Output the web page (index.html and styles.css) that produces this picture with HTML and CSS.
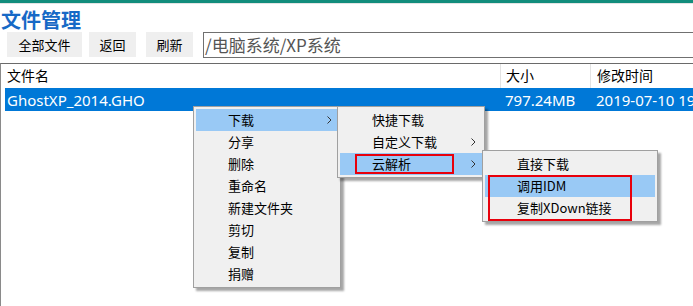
FILE: index.html
```html
<!DOCTYPE html>
<html lang="zh-CN">
<head>
<meta charset="utf-8">
<title>文件管理</title>
<link rel="stylesheet" href="styles.css">
</head>
<body>
<div class="app">
  <h1 class="title">文件管理</h1>
  <div class="toolbar">
    <button class="btn btn-wide">全部文件</button>
    <button class="btn">返回</button>
    <button class="btn btn-gap">刷新</button>
    <div class="path">/电脑系统/XP系统</div>
  </div>
  <div class="table">
    <div class="row head">
      <div class="c-name">文件名</div>
      <div class="c-size">大小</div>
      <div class="c-time">修改时间</div>
    </div>
    <div class="row sel">
      <div class="c-name">GhostXP_2014.GHO</div>
      <div class="c-size">797.24MB</div>
      <div class="c-time">2019-07-10 19:32</div>
    </div>
  </div>

  <div class="menu menu1">
    <div class="item hl">下载<svg class="arr" viewBox="0 0 5 8" width="5" height="8"><path d="M0.5 0.5 L4 4 L0.5 7.5" fill="none" stroke="#333" stroke-width="1"/></svg></div>
    <div class="item">分享</div>
    <div class="item">删除</div>
    <div class="item">重命名</div>
    <div class="item">新建文件夹</div>
    <div class="item">剪切</div>
    <div class="item">复制</div>
    <div class="item">捐赠</div>
  </div>

  <div class="menu menu2">
    <div class="item">快捷下载</div>
    <div class="item">自定义下载<svg class="arr" viewBox="0 0 5 8" width="5" height="8"><path d="M0.5 0.5 L4 4 L0.5 7.5" fill="none" stroke="#333" stroke-width="1"/></svg></div>
    <div class="item hl">云解析<svg class="arr" viewBox="0 0 5 8" width="5" height="8"><path d="M0.5 0.5 L4 4 L0.5 7.5" fill="none" stroke="#333" stroke-width="1"/></svg></div>
    <div class="mark mark1"></div>
  </div>

  <div class="menu menu3">
    <div class="item">直接下载</div>
    <div class="item hl">调用IDM</div>
    <div class="item">复制XDown链接</div>
    <div class="mark mark2"></div>
  </div>
</div>
</body>
</html>
```
FILE: styles.css
```css
* { box-sizing: border-box; }
html, body { margin: 0; padding: 0; background: #fff; overflow: hidden; }
body {
  font-family: "Noto Sans", "Noto Sans CJK SC", sans-serif;
  color: #000;
}
.app {
  position: relative;
  width: 693px;
  height: 306px;
  border-top: 3px solid #128d7c;
  overflow: hidden;
}
.app::before {
  content: "";
  display: block;
  height: 1px;
  background: #e4e4e4;
}
.title {
  margin: 0;
  padding: 3px 0 0 1px;
  height: 27px;
  font-family: "Noto Sans CJK SC", sans-serif;
  font-size: 20px;
  font-weight: 700;
  line-height: 26px;
  color: #1769c6;
  letter-spacing: 0;
}
.toolbar {
  display: flex;
  align-items: center;
  padding-left: 7px;
  height: 27px;
}
.btn {
  height: 25px;
  width: 47px;
  margin-right: 10px;
  border: none;
  background: #efefef;
  font-family: "Noto Sans CJK SC", sans-serif;
  font-size: 13px;
  color: #000;
  padding: 0;
  flex: none;
}
.btn-wide { width: 75px; margin-right: 7px; }
.path {
  flex: 1;
  height: 26px;
  border: 1px solid #707070;
  border-right: none;
  font-family: "Noto Sans CJK SC", sans-serif;
  font-size: 17px;
  line-height: 23px;
  color: #555;
  padding-left: 1px;
  margin-left: 0;
}
.table {
  margin-top: 5px;
  border-top: 1px solid #6a6a6a;
  border-left: 1px solid #8a8a8a;
  height: 260px;
  padding-left: 4px;
}
.row {
  display: flex;
  height: 24px;
  align-items: center;
}
.head {
  height: 24px;
  font-family: "Noto Sans CJK SC", sans-serif;
  font-size: 14px;
}
.head > div { height: 24px; line-height: 22px; }
.head .c-size, .head .c-time { border-left: 1px solid #e3e3e3; }
.c-name { width: 495px; flex: none; padding-left: 2px; }
.c-size { width: 90px; flex: none; padding-left: 5px; }
.c-time { flex: none; width: 200px; padding-left: 6px; white-space: nowrap; }
.sel {
  background: #0078d7;
  color: #fff;
  font-size: 15px;
  height: 23px;
}
.sel > div { line-height: 22px; }

.menu {
  position: absolute;
  background: #f0f0f0;
  border: 1px solid #a0a0a0;
  padding: 2px;
  box-shadow: 3px 3px 2px rgba(0,0,0,0.35);
  font-family: "Noto Sans CJK SC", sans-serif;
  font-size: 13px;
}
.item {
  position: relative;
  height: 22px;
  line-height: 22px;
  padding-left: 32px;
  white-space: nowrap;
}
.item.hl { background: #99c9f5; }
.arr {
  position: absolute;
  right: 6px;
  top: 7px;
}
.menu1 { left: 193px; top: 103px; width: 148px; }
.menu2 { left: 337px; top: 103px; width: 148px; }
.menu3 { left: 482px; top: 147px; width: 176px; }
.mark {
  position: absolute;
  border: 2px solid #e8000b;
}
.mark1 { left: 17px; top: 47px; width: 99px; height: 20px; }
.mark2 { left: 5px; top: 24px; width: 144px; height: 46px; }
```
